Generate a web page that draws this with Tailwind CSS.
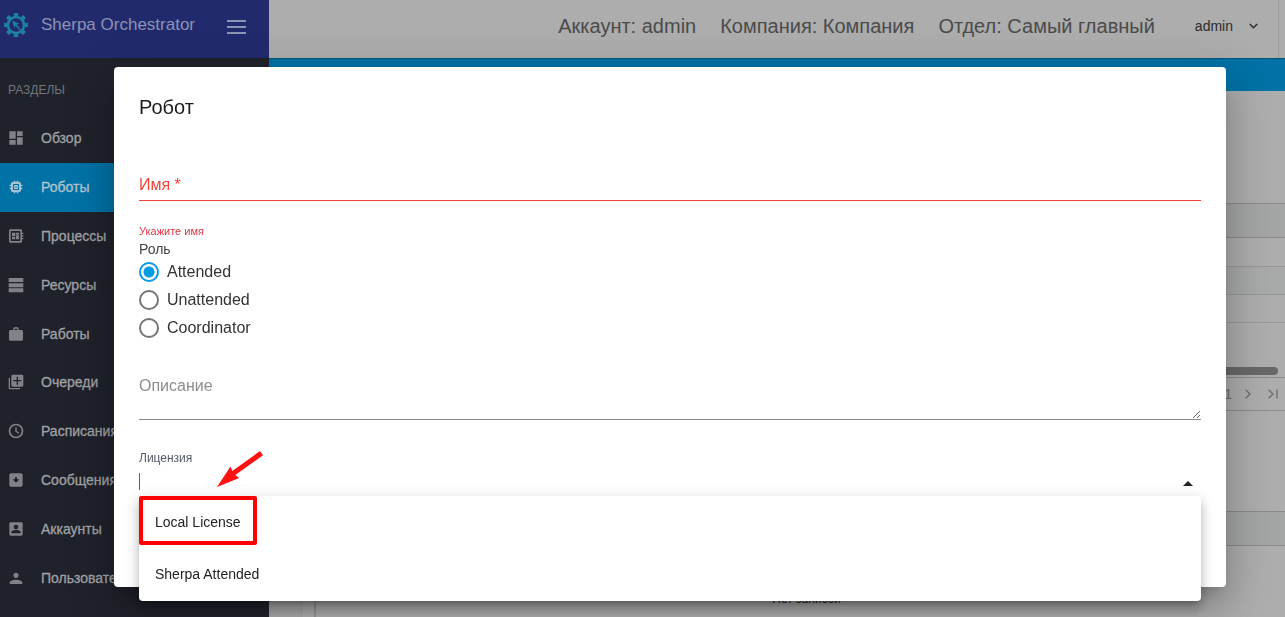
<!DOCTYPE html>
<html lang="ru">
<head>
<meta charset="utf-8">
<title>Sherpa Orchestrator</title>
<script src="https://cdn.jsdelivr.net/npm/@tailwindcss/browser@4"></script>
</head>
<body class="h-screen overflow-hidden bg-[#adadad] font-['Liberation_Sans',Arial,sans-serif]">
<div class="flex h-full">
  <aside class="flex w-[269px] shrink-0 flex-col bg-[#1f222b]">
    <div class="flex h-[58px] shrink-0 items-center bg-[#212a6c] pb-2 pl-1 pr-[23px] text-[#8e92b5]">
      <svg class="size-6 text-[#1e7fa0]" viewBox="0 0 24 24" fill="none" stroke="currentColor">
        <circle cx="12" cy="12" r="8" stroke-width="2.6"/>
        <g stroke-width="4.2"><path d="M12 0v3.6M12 20.4V24M0 12h3.6M20.4 12H24M3.500 3.500l2.600 2.600M17.900 17.900l2.600 2.600M3.500 20.500l2.600-2.600M17.900 6.100l2.600-2.600"/></g>
        <path d="M8 7.500l7 3-2.200 1.400 4 4.700-1 .8-4.200-4.600-1.200 2.200z" fill="currentColor" stroke="none"/>
      </svg>
      <span class="ml-[13px] text-[17px]">Sherpa Orchestrator</span>
      <button class="ml-auto pt-1" aria-label="Меню">
        <svg class="h-[14px] w-[19px]" viewBox="0 0 19 14" fill="currentColor"><path d="M0 0h19v2H0zM0 6h19v2H0zM0 12h19v2H0z"/></svg>
      </button>
    </div>
    <div class="flex h-14 shrink-0 items-center pl-2 pt-2 text-xs text-[#73757a]">РАЗДЕЛЫ</div>
    <nav class="mb-[15px] grid min-h-0 flex-1 auto-rows-fr text-sm text-[#a0a1a4] [&_a]:flex [&_a]:items-center [&_a]:gap-4 [&_a]:pl-2 [&_svg]:size-4 [&_svg]:fill-[#808287] [&_svg]:mr-px [&_span]:[-webkit-text-stroke:0.3px]">
      <a href="#"><svg viewBox="0 0 24 24"><path d="M2 13h9.500V2H2v11zm0 9h9.500v-7H2v7zm11.500 0H22V11h-8.500v11zm0-20v7H22V2h-8.500z"/></svg><span>Обзор</span></a>
      <a href="#" class="bg-[#0072a6] text-[#b0c4ce] [&>svg]:fill-[#a8c3cf]!"><svg viewBox="0 0 24 24"><path fill-rule="evenodd" d="M21.500 11V8.500h-2V7c0-1.400-1.100-2.500-2.500-2.500h-1.500v-2H13v2h-2v-2H8.500v2H7C5.600 4.500 4.500 5.600 4.500 7v1.500h-2V11h2v2h-2v2.500h2V17c0 1.400 1.100 2.500 2.500 2.500h1.500v2H11v-2h2v2h2.500v-2H17c1.400 0 2.500-1.100 2.500-2.500v-1.500h2V13h-2v-2zM7.500 7.500h9v9h-9zM9 9h6v6H9zm2 2h2v2h-2z"/></svg><span>Роботы</span></a>
      <a href="#"><svg viewBox="0 0 24 24"><path fill-rule="evenodd" d="M23 9V7h-2V4c0-1.100-.9-2-2-2H3.500c-1.100 0-2 .9-2 2v16c0 1.100.9 2 2 2H19c1.100 0 2-.9 2-2v-3h2v-2h-2v-2h2v-2h-2V9h2zm-4.500 10.500H4v-15h14.500v15zM6 13h5v4H6zm6-6h4.500v3H12zM6 7h5v5H6zm6 4h4.500v6H12z"/></svg><span>Процессы</span></a>
      <a href="#"><svg viewBox="0 0 24 24"><path d="M1 1.500h22v6H1zM1 9.250h22v6H1zM1 17h22v6H1z"/></svg><span>Ресурсы</span></a>
      <a href="#"><svg viewBox="0 0 24 24"><path fill-rule="evenodd" d="M20 6h-4V4c0-1.100-.9-2-2-2h-4C8.900 2 8 2.900 8 4v2H4C2.800 6 1.500 7 1.500 8.200V20c0 1.100.9 2 2 2h17c1.100 0 2-.9 2-2V8.200C22.500 7 21.200 6 20 6zm-6 0h-4V4h4z"/></svg><span>Работы</span></a>
      <a href="#"><svg viewBox="0 0 24 24"><path fill-rule="evenodd" d="M3 6H1v15c0 1.100.9 2 2 2h15v-2H3V6zm18-5H7c-1.100 0-2 .9-2 2v14c0 1.100.9 2 2 2h14c1.100 0 2-.9 2-2V3c0-1.100-.9-2-2-2zm-1 10h-5v5h-2v-5H8V9h5V4h2v5h5z"/></svg><span>Очереди</span></a>
      <a href="#"><svg viewBox="0 0 24 24"><path fill-rule="evenodd" d="M12 1a11 11 0 1 0 0 22 11 11 0 0 0 0-22zm0 19.500a8.500 8.500 0 1 1 0-17 8.500 8.500 0 0 1 0 17zM13 6.500h-2V13l5 3.200 1-1.600-4-2.500z"/></svg><span>Расписания</span></a>
      <a href="#"><svg viewBox="0 0 24 24"><path fill-rule="evenodd" d="M5 2h14a3 3 0 0 1 3 3v14a3 3 0 0 1-3 3H5a3 3 0 0 1-3-3V5a3 3 0 0 1 3-3zm5.500 6v3H7l5 5 5-5h-3.500V8z"/></svg><span>Сообщения</span></a>
      <a href="#"><svg viewBox="0 0 24 24"><path fill-rule="evenodd" d="M4 2h16a2 2 0 0 1 2 2v16a2 2 0 0 1-2 2H4a2 2 0 0 1-2-2V4c0-1.100.9-2 2-2zm8 3.500a3.500 3.500 0 1 0 0 7 3.500 3.500 0 0 0 0-7zM5 18.500h14v-1.500c0-2.300-4.700-3.500-7-3.500s-7 1.200-7 3.500z"/></svg><span>Аккаунты</span></a>
      <a href="#"><svg viewBox="0 0 24 24"><path d="M12 12c2.200 0 4-1.800 4-4s-1.800-4-4-4-4 1.800-4 4 1.800 4 4 4zm0 2.500c-2.700 0-9.500 1.300-9.500 4V21h19v-2.500c0-2.700-6.800-4-9.500-4z"/></svg><span>Пользователи</span></a>
    </nav>
  </aside>

  <div class="flex min-w-0 flex-1 flex-col">
    <header class="mr-[6px] flex h-[58px] shrink-0 items-center justify-end border-r border-[#9c9c9c] pb-[6px] pr-5 text-xl text-[#4b4b4b]">
      <span>Аккаунт: admin</span>
      <span class="ml-6">Компания: Компания</span>
      <span class="ml-6">Отдел: Самый главный</span>
      <button class="ml-10 flex items-center gap-4 text-sm text-[#2c2c2c]">admin
        <svg class="h-2 w-[9px]" viewBox="0 0 9 8" fill="none" stroke="currentColor" stroke-width="1.500"><path d="M.8 2l3.700 3.700L8.200 2"/></svg>
      </button>
    </header>
    <div class="h-[33px] shrink-0 border-t border-[#0a5577] bg-[#0072a6]"></div>
    <main class="flex min-h-0 flex-1">
      <div class="w-[33px] shrink-0 border-r border-[#a0a0a0] bg-[#a9a9a9]"></div>
      <div class="ml-[12px] flex flex-1 flex-col border-l-2 border-[#949494]">
        <div class="h-[112px] shrink-0"></div>
        <div class="h-[35px] shrink-0 border-y border-[#8a8a8a] bg-[#a3a6a4]"></div>
        <div class="h-[28px] shrink-0"></div>
        <div class="h-[29px] shrink-0 border-y border-[#979797] bg-[#a8aaa9]"></div>
        <div class="h-[28px] shrink-0 border-b border-[#999]"></div>
        <div class="flex h-[54px] shrink-0 items-end pb-[2px] pr-[7px]"><div class="h-2 w-full rounded-full bg-[#686868]"></div></div>
        <div class="flex h-[34px] shrink-0 items-center justify-end gap-3 border-y border-[#8a8a8a] pb-px pr-[7px] text-sm text-[#6c6c6c]">
          <span>1</span>
          <svg class="ml-px h-[10px] w-[6px]" viewBox="0 0 6 10" fill="none" stroke="currentColor" stroke-width="1.300"><path d="M.7.7L5 5 .7 9.300"/></svg>
          <svg class="ml-[5px] h-[10px] w-[10px]" viewBox="0 0 10 10" fill="none" stroke="currentColor" stroke-width="1.300"><path d="M.7.7L5 5 .7 9.300M9 .5v9"/></svg>
        </div>
        <div class="h-[100px] shrink-0"></div>
        <div class="h-[35px] shrink-0 border-y border-[#8a8a8a] bg-[#a3a6a4]"></div>
        <p class="pl-3 pt-[45px] text-center text-xs leading-4 text-[#222]">Нет записей</p>
      </div>
    </main>
  </div>
</div>

<div class="fixed inset-0 pb-[30px] pl-[114px] pr-[59px] pt-[67px]">
  <form role="dialog" aria-labelledby="dialog-title" class="h-full rounded bg-white px-[25px] pt-7 text-[#2b2b2b] shadow-[0_11px_15px_-7px_rgba(0,0,0,.2),0_24px_38px_3px_rgba(0,0,0,.14),0_9px_46px_8px_rgba(0,0,0,.12)]">
    <h1 id="dialog-title" class="text-xl leading-6 text-[#1c1c1c]">Робот</h1>
    <div class="mt-[54px] flex h-7 items-start border-b border-[#f44336] text-base leading-6 text-[#f44336]">
      <label for="name">Имя *</label>
      <input id="name" class="h-6 min-w-0 flex-1 outline-none" required>
    </div>
    <p class="mt-6 text-[11px] leading-3 text-[#dc3545]">Укажите имя</p>
    <fieldset>
      <legend class="pt-1 text-sm leading-4 text-[#444]">Роль</legend>
      <div class="grid auto-rows-[28px] pt-px text-base text-[#333] [&_input]:size-5 [&_input]:appearance-none [&_input]:rounded-full [&_input]:border-2 [&_input]:border-[#757575] [&_label]:flex [&_label]:items-center [&_label]:gap-2">
        <label><input type="radio" name="role" checked class="checked:border-[#039be5]! checked:bg-[radial-gradient(circle,#039be5_5px,#fff_6px)]">Attended</label>
        <label><input type="radio" name="role">Unattended</label>
        <label><input type="radio" name="role">Coordinator</label>
      </div>
    </fieldset>
    <textarea aria-label="Описание" placeholder="Описание" class="mt-8 block h-[46px] w-full resize-y border-b border-[#8a8a8a] text-base leading-6 outline-none placeholder:text-[#8c8c8c]"></textarea>
    <div class="relative pt-[30px]">
      <label for="license" class="block text-xs leading-4 text-[#555b6b]">Лицензия</label>
      <div class="flex h-[30px] items-center">
        <i class="h-[17px] w-px bg-[#5a6070]"></i>
        <input id="license" role="combobox" aria-expanded="true" class="h-6 min-w-0 flex-1 outline-none">
        <svg class="mr-2 mt-1 h-[5px] w-[10px]" viewBox="0 0 10 5"><path d="M0 5l5-5 5 5z" fill="#222"/></svg>
      </div>
      <div role="listbox" class="absolute inset-x-0 top-[76px] rounded bg-white text-sm text-[#222] shadow-[0_5px_5px_-3px_rgba(0,0,0,.2),0_8px_10px_1px_rgba(0,0,0,.14),0_3px_14px_2px_rgba(0,0,0,.12)]">
        <button type="button" role="option" class="block h-[52px] w-full px-4 text-left">Local License</button>
        <button type="button" role="option" class="block h-[53px] w-full px-4 pb-[2px] text-left">Sherpa Attended</button>
      </div>
      <div class="pointer-events-none absolute left-0 top-[76px] h-[49px] w-[118px] rounded-xs border-4 border-[#f00]"></div>
      <svg class="pointer-events-none absolute left-[77px] top-[31px] h-[38px] w-[48px]" viewBox="0 0 48 38"><path d="M44 0l3 4.200L19.300 24l3.900 3L1 36 14.500 15.500l1.800 4.500z" fill="#f11"/></svg>
    </div>
  </form>
</div>
</body>
</html>
